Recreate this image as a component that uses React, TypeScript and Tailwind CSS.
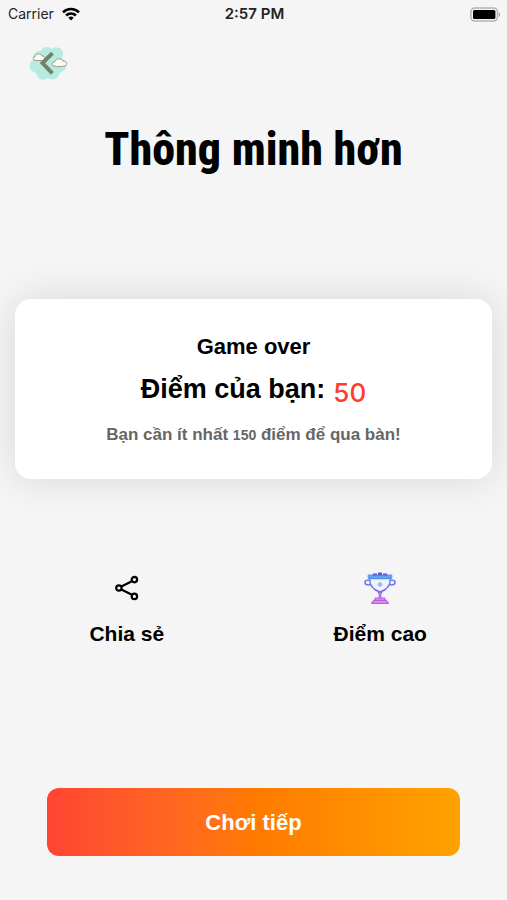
import type { ReactNode } from 'react'

interface ActionButtonProps {
  label: string
  icon: ReactNode
}

function WifiIcon() {
  return (
    <svg className="w-[18px] h-[14px]" viewBox="0 0 18 14" fill="none" stroke="#000" strokeWidth="2.6">
      <path d="M1 5.3a11.3 11.3 0 0 1 16 0" />
      <path d="M4.1 8.5a6.9 6.9 0 0 1 9.8 0" />
      <path d="M9 13.6 6.3 10.8a3.8 3.8 0 0 1 5.4 0Z" fill="#000" stroke="none" />
    </svg>
  )
}

function BatteryIcon() {
  return (
    <svg className="w-[31px] h-[15px]" viewBox="0 0 31 15" fill="none">
      <rect x="0.9" y="0.9" width="26.6" height="13.2" rx="4" stroke="#b3b3b3" strokeWidth="1.5" />
      <rect x="3" y="3" width="22.4" height="9" rx="1.5" fill="#000" />
      <path d="M28.8 5.2c1.8.6 1.8 4 0 4.6Z" fill="#a6a6a6" />
    </svg>
  )
}

function BackIcon() {
  return (
    <svg className="w-10 h-9" viewBox="0 0 40 36" fill="none">
      <path
        d="M12 5c1-5 9-5 11-2 4-3 11-1 11 4 0 3-1 4-1 6 6 2 6 9 1 12-2 2-3 1-4 4-2 5-8 5-11 3-4 3-10 2-11-3 0-2-1-2-3-3C0 25-1 18 3 15c2-2 1-3 1-5 1-4 5-5 8-5Z"
        fill="#b7ebdf"
      />
      <path
        d="M7 14.5c-3 0-4-3-1-3.8 1-3.6 6-3.6 7-.8 3 0 4 3.8 1 4.6Z"
        fill="#fff9f3"
        stroke="#9b978e"
        strokeWidth="1"
      />
      <path d="M22 8.5 13.5 17l8.5 9" stroke="#728368" strokeWidth="4" strokeLinecap="square" />
      <path
        d="M25 20c-3-.8-2.6-3.8.6-4 1.2-4 7-4.2 8.4-1 4-.8 5 3.8 2 4.8-3 1-8 1-11 .2Z"
        fill="#fff9f3"
        stroke="#9b978e"
        strokeWidth="1"
      />
    </svg>
  )
}

function ShareIcon() {
  return (
    <svg className="w-6 h-7" viewBox="0 0 24 28" fill="none" stroke="#000" strokeWidth="2.2">
      <path d="m6.4 12.6 10-5.2M6.4 15.4l10 5.2" />
      <circle cx="3.9" cy="14" r="2.7" />
      <circle cx="19.4" cy="5.6" r="2.7" />
      <circle cx="19.4" cy="22.4" r="2.7" />
    </svg>
  )
}

function TrophyIcon() {
  return (
    <svg className="w-8 h-8" viewBox="0 0 32 32" fill="none" strokeLinejoin="round">
      <defs>
        <linearGradient id="trophy" x1="0" y1="0" x2="0" y2="32" gradientUnits="userSpaceOnUse">
          <stop offset="0" stopColor="#4e9cf0" />
          <stop offset="0.5" stopColor="#7566e4" />
          <stop offset="1" stopColor="#d95fe6" />
        </linearGradient>
      </defs>
      <path d="M5.5 6.5c0 7 4 11.5 10.5 13.5 6.5-2 10.5-6.5 10.5-13.5Z" fill="#eef4ff" stroke="url(#trophy)" strokeWidth="1.5" />
      <path d="M4.2 3h23.6v3.2H4.2Z" fill="#62a4f0" stroke="#5399e9" strokeWidth="1" />
      <path d="M9 1.5h4v2H9ZM14 .5h4v3h-4ZM19 1.5h4v2h-4Z" fill="#6554d9" />
      <path
        d="M5.5 8.3H3.4C1.9 8.3 1 9.2 1 10.5c0 1.9 1.7 2.8 5.3 2.3M26.5 8.3h2.1c1.5 0 2.4.9 2.4 2.2 0 1.9-1.7 2.8-5.3 2.3"
        stroke="url(#trophy)"
        strokeWidth="1.6"
      />
      <circle cx="16" cy="12.5" r="2" fill="#8cb8f5" stroke="#a9c8fa" />
      <path d="M14 20h4l-1.2 2.5V26h-1.6v-3.5Z" fill="#a78cef" stroke="url(#trophy)" strokeWidth="1" />
      <path d="M11.5 26h9l1 2.3h-11ZM10 28.3h12l2.5 3h-17Z" fill="#e08cf0" stroke="#bd5ee6" strokeWidth="1.2" />
    </svg>
  )
}

function StatusBar() {
  return (
    <header className="grid grid-cols-3 items-center h-7 pl-2 pr-1.5 font-['Inter',sans-serif] text-[#222]">
      <div className="flex items-center gap-2 text-sm">
        <span>Carrier</span>
        <WifiIcon />
      </div>
      <span className="text-center text-[15px] font-semibold">2:57 PM</span>
      <div className="flex justify-end">
        <BatteryIcon />
      </div>
    </header>
  )
}

function ActionButton({ label, icon }: ActionButtonProps) {
  return (
    <button type="button" className="flex flex-1 flex-col items-center gap-3.5">
      <span className="flex items-center h-9">{icon}</span>
      <span className="text-[21px] leading-7 font-bold">{label}</span>
    </button>
  )
}

export default function App() {
  return (
    <div className="flex flex-col min-h-screen bg-[#f5f5f5] text-black font-['Liberation_Sans',Arial,sans-serif]">
      <StatusBar />

      <nav className="px-[29px] pt-[18px]">
        <button type="button" aria-label="Quay lại" className="block">
          <BackIcon />
        </button>
      </nav>

      <main className="flex flex-1 flex-col">
        <h1 className="pt-[37px] text-center text-[46px] leading-[60px] font-extrabold font-['Roboto_Condensed',Roboto,sans-serif]">
          Thông minh hơn
        </h1>

        {/* Result card */}
        <section className="mt-[120px] mx-[15px] flex flex-col items-center rounded-2xl bg-white py-8 shadow-[0_0_40px_rgba(0,0,0,0.12)]">
          <h2 className="text-[22px] leading-8 font-bold">Game over</h2>
          <p className="mt-2 flex items-end gap-2 text-[27px] leading-9 font-bold">
            <span className="pb-1">Điểm của bạn:</span>
            <span className="text-[26px] font-medium font-['Inter',sans-serif] text-[#ff3b30]">50</span>
          </p>
          <p className="mt-3 text-[17px] leading-6 font-bold text-[#666]">
            Bạn cần ít nhất <span className="text-sm">150</span> điểm để qua bàn!
          </p>
        </section>

        <div className="mt-[91px] flex">
          <ActionButton label="Chia sẻ" icon={<ShareIcon />} />
          <ActionButton label="Điểm cao" icon={<TrophyIcon />} />
        </div>

        <div className="mt-auto px-[47px] pb-11">
          <button
            type="button"
            className="w-full h-[68px] rounded-xl bg-linear-to-r from-[#ff4332] via-[#ff7a00] to-[#ffa200] text-[22px] font-bold text-white"
          >
            Chơi tiếp
          </button>
        </div>
      </main>
    </div>
  )
}
